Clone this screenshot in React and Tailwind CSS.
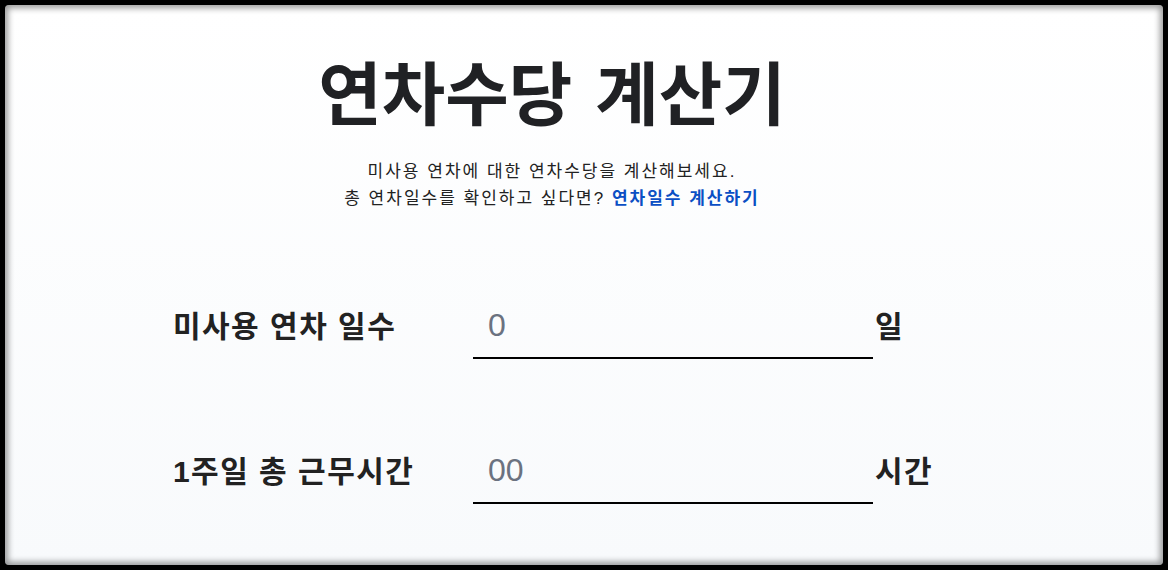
export default function App() {
  const font = { fontFamily: '"Liberation Sans", "Noto Sans CJK KR", sans-serif' };
  return (
    <div className="w-[1168px] h-[570px] bg-black p-[5px]" style={font}>
      <div className="w-full h-full rounded-[4px] bg-gradient-to-b from-white to-[#f8fafc] shadow-[inset_0_0_6px_3px_rgba(0,0,0,0.4)] flex justify-center pr-[64px]">
        <div className="flex flex-col items-center pt-[52px]">
          <h1 className="text-[69px] leading-[80px] font-bold text-[#202124] [word-spacing:4px]">연차수당 계산기</h1>
          <p className="mt-[21px] text-[17px] leading-[27px] tracking-[2px] text-[#222222] text-center">
            미사용 연차에 대한 연차수당을 계산해보세요.
            <br />
            총 연차일수를 확인하고 싶다면? <a className="font-bold text-[#0b4fc4]">연차일수 계산하기</a>
          </p>
          <div className="mt-[81px] ml-[2px] flex flex-col gap-[79px]">
            <div className="flex items-center h-[66px]">
              <div className="w-[300px] text-[30px] font-bold tracking-[1.5px] text-[#222222]">미사용 연차 일수</div>
              <div className="w-[400px] h-[66px] border-b-2 border-black flex items-center pl-[15px] text-[32px] text-[#6b7280]">0</div>
              <div className="pl-[2px] text-[30px] font-bold tracking-[1.5px] text-[#222222]">일</div>
            </div>
            <div className="flex items-center h-[66px]">
              <div className="w-[300px] text-[30px] font-bold tracking-[1.5px] text-[#222222]">1주일 총 근무시간</div>
              <div className="w-[400px] h-[66px] border-b-2 border-black flex items-center pl-[15px] text-[32px] text-[#6b7280]">00</div>
              <div className="pl-[2px] text-[30px] font-bold tracking-[1.5px] text-[#222222]">시간</div>
            </div>
          </div>
        </div>
      </div>
    </div>
  );
}
